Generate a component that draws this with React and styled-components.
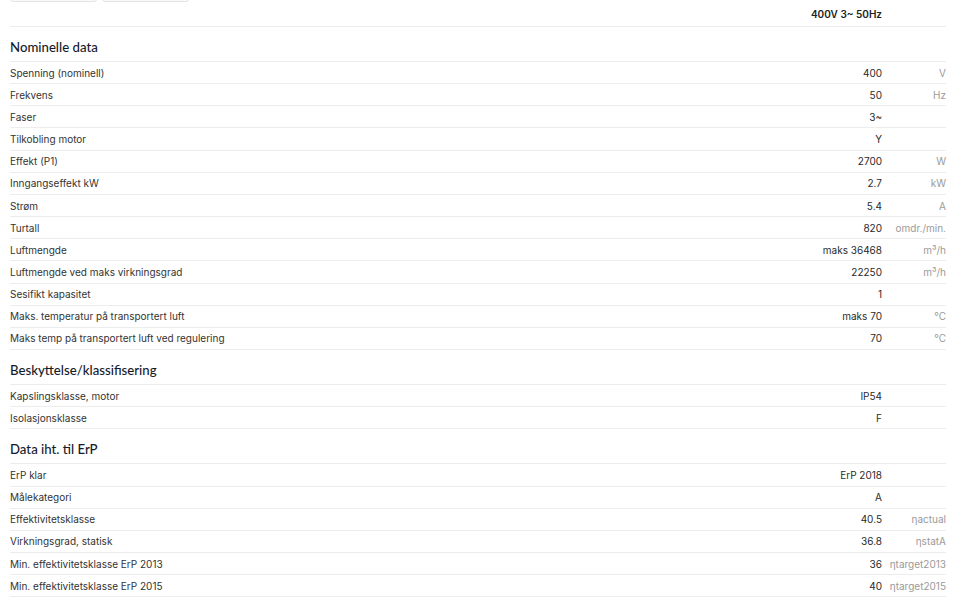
import styled, { createGlobalStyle } from "styled-components";

const GlobalStyle = createGlobalStyle`
  body {
    margin: 0;
    background: #ffffff;
    font-family: Inter, "Liberation Sans", sans-serif;
    color: #2b2b2b;
  }
`;

const sections = [
  {
    title: "Nominelle data",
    rows: [
      ["Spenning (nominell)", "400", "V"],
      ["Frekvens", "50", "Hz"],
      ["Faser", "3~", ""],
      ["Tilkobling motor", "Y", ""],
      ["Effekt (P1)", "2700", "W"],
      ["Inngangseffekt kW", "2.7", "kW"],
      ["Strøm", "5.4", "A"],
      ["Turtall", "820", "omdr./min."],
      ["Luftmengde", "maks 36468", "m³/h"],
      ["Luftmengde ved maks virkningsgrad", "22250", "m³/h"],
      ["Sesifikt kapasitet", "1", ""],
      ["Maks. temperatur på transportert luft", "maks 70", "°C"],
      ["Maks temp på transportert luft ved regulering", "70", "°C"],
    ],
  },
  {
    title: "Beskyttelse/klassifisering",
    rows: [
      ["Kapslingsklasse, motor", "IP54", ""],
      ["Isolasjonsklasse", "F", ""],
    ],
  },
  {
    title: "Data iht. til ErP",
    rows: [
      ["ErP klar", "ErP 2018", ""],
      ["Målekategori", "A", ""],
      ["Effektivitetsklasse", "40.5", "ηactual"],
      ["Virkningsgrad, statisk", "36.8", "ηstatA"],
      ["Min. effektivitetsklasse ErP 2013", "36", "ηtarget2013"],
      ["Min. effektivitetsklasse ErP 2015", "40", "ηtarget2015"],
    ],
  },
];

export default function App() {
  return (
    <>
      <GlobalStyle />
      <Page>
        <Tabs>
          <Tab />
          <Tab />
        </Tabs>
        <HeaderRow>
          <span />
          <HeaderValue>400V 3~ 50Hz</HeaderValue>
          <span />
        </HeaderRow>
        {sections.map((section) => (
          <Section key={section.title}>
            <SectionTitle>{section.title}</SectionTitle>
            {section.rows.map(([label, value, unit]) => (
              <Row key={label}>
                <Label>{label}</Label>
                <Value>{value}</Value>
                <Unit>{unit}</Unit>
              </Row>
            ))}
          </Section>
        ))}
      </Page>
    </>
  );
}

const Page = styled.div`
  padding: 0 14px 0 10px;
  overflow: hidden;
  height: 600px;
  box-sizing: border-box;
`;

const Tabs = styled.div`
  display: flex;
  gap: 5px;
  margin-top: -20px;
  height: 22px;
`;

const Tab = styled.div`
  width: 85px;
  height: 20px;
  border: 1px solid #e4e4e4;
  border-radius: 3px;
  background: #fafafa;
`;

const gridCols = `
  display: grid;
  grid-template-columns: 1fr auto 64px;
  align-items: center;
`;

const HeaderRow = styled.div`
  ${gridCols}
  height: 25px;
  box-sizing: border-box;
  border-bottom: 1px solid #ececec;
`;

const HeaderValue = styled.div`
  font-size: 10px;
  font-weight: 600;
  color: #222;
  text-align: right;
`;

const Section = styled.section`
  display: flex;
  flex-direction: column;
`;

const SectionTitle = styled.h2`
  margin: 0;
  height: 35px;
  display: flex;
  align-items: flex-end;
  padding-bottom: 6px;
  box-sizing: border-box;
  font-family: Lato, "Noto Sans", sans-serif;
  font-size: 13.2px;
  font-weight: 500;
  color: #141b2a;
  border-bottom: 1px solid #ececec;
`;

const Row = styled.div`
  ${gridCols}
  height: 22.17px;
  box-sizing: border-box;
  border-bottom: 1px solid #ededed;
  font-size: 10px;
`;

const Label = styled.span`
  color: #333;
`;

const Value = styled.span`
  color: #2a2a2a;
  text-align: right;
`;

const Unit = styled.span`
  color: #9a9a9a;
  text-align: right;
`;
